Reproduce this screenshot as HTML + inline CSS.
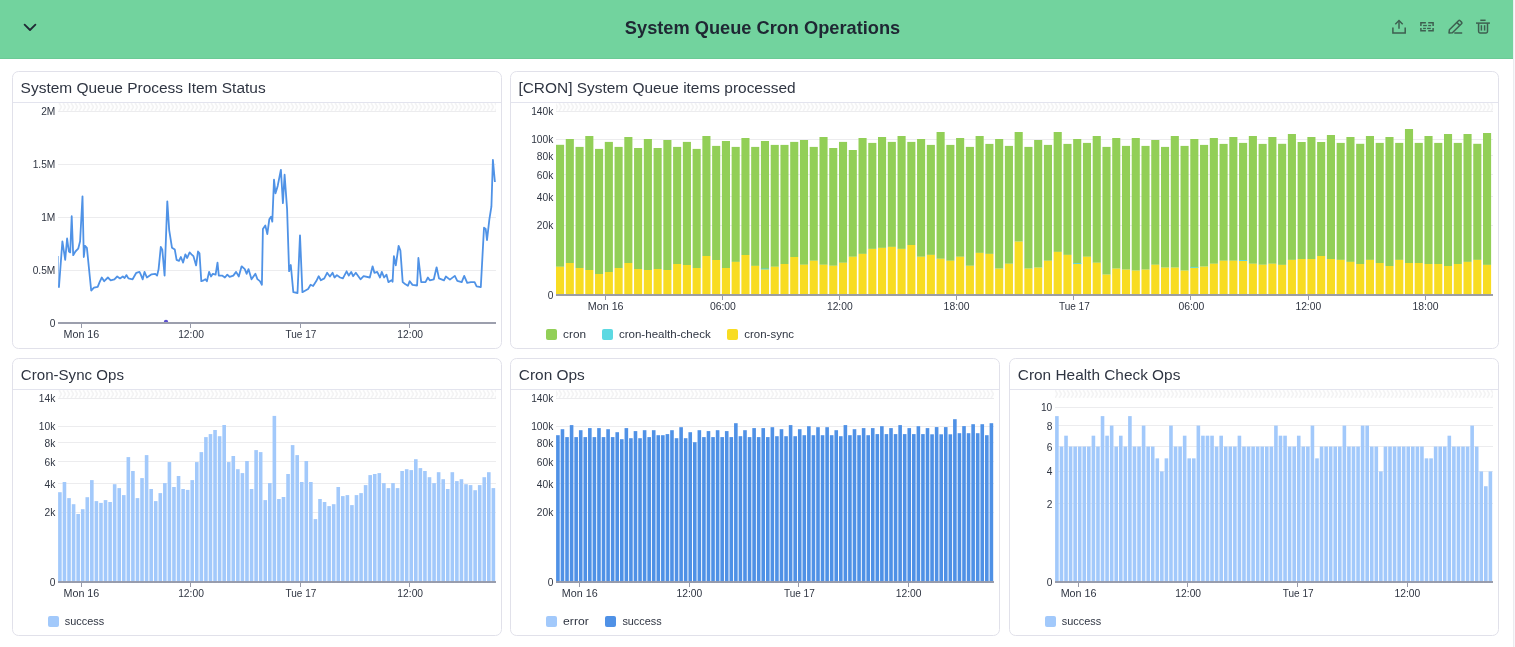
<!DOCTYPE html>
<html><head><meta charset="utf-8"><title>System Queue Cron Operations</title>
<style>
html,body{margin:0;padding:0;background:#fff;}
body{width:1515px;height:647px;overflow:hidden;font-family:"Liberation Sans", sans-serif;}
svg{display:block;font-family:"Liberation Sans", sans-serif;will-change:transform;}
</style></head><body>
<svg width="1515" height="647" viewBox="0 0 1515 647">
<defs><pattern id="hatch" x="2.8" y="103" width="4" height="8" patternUnits="userSpaceOnUse"><path d="M0 -0.5 L2.5 4 L0 8.5" fill="none" stroke="#f1f1f2" stroke-width="1.5"/></pattern><pattern id="hatch2" x="2.8" y="390" width="4" height="8" patternUnits="userSpaceOnUse"><path d="M0 -0.5 L2.5 4 L0 8.5" fill="none" stroke="#f1f1f2" stroke-width="1.5"/></pattern></defs>
<rect x="0" y="0" width="1513" height="59" fill="#72d39e"/>
<rect x="0" y="58" width="1513" height="1" fill="#6cca96"/>
<rect x="1513" y="0" width="1" height="647" fill="#ebebef"/>
<rect x="1514" y="0" width="1" height="647" fill="#f7f7fa"/>
<path d="M24.6 24.6 L30 30 L35.4 24.6" fill="none" stroke="#1f2a35" stroke-width="1.8" stroke-linecap="round" stroke-linejoin="round"/>
<text x="624.85" y="34.10" font-size="18.1" fill="#1f2733" font-weight="bold" textLength="275.38" lengthAdjust="spacingAndGlyphs">System Queue Cron Operations</text>
<g fill="none" stroke="#3e5f50" stroke-width="1.5" stroke-linecap="butt" stroke-linejoin="miter"><path d="M1392.9 27.4 V32.9 H1405.2 V27.4"/><path d="M1399 20.5 V28.7"/><path d="M1395.3 24.2 L1399 20.5 L1402.7 24.2"/><path d="M1425.9 22.8 H1420.9 V26"/><path d="M1420.9 28.1 V30.8 H1425.9"/><path d="M1428.2 22.8 H1433.1 V26"/><path d="M1433.1 28.1 V30.8 H1428.2"/></g>
<g fill="#3e5f50"><rect x="1423.1" y="24.9" width="3.7" height="1.3"/><rect x="1428.2" y="24.9" width="2.9" height="1.3"/><rect x="1423.1" y="27.8" width="2.8" height="1.3"/><rect x="1427.1" y="27.8" width="3.7" height="1.3"/></g>
<g fill="none" stroke="#3e5f50" stroke-width="1.5" stroke-linejoin="round"><path d="M1449 33 L1449.4 29.8 L1458.5 20.7 Q1459.3 19.9 1460.1 20.7 L1461.5 22.1 Q1462.3 22.9 1461.5 23.7 L1452.4 32.8 Z"/><path d="M1456.8 22.4 L1459.8 25.4"/><path d="M1454.3 33 H1462.2"/><path d="M1480.3 20.3 H1485.6"/><path d="M1476 23.1 H1489.9"/><path d="M1478.6 23.2 V31.6 Q1478.6 33 1480 33 H1486.1 Q1487.5 33 1487.5 31.6 V23.2"/><path d="M1481.4 25.2 V30.6"/><path d="M1484.6 25.2 V30.6"/></g>
<rect x="12.5" y="71.5" width="489" height="277" rx="6" ry="6" fill="#fff" stroke="#e1e1ea" stroke-width="1"/>
<text x="20.60" y="93.20" font-size="15.45" fill="#2f3542" font-weight="normal" textLength="245.04" lengthAdjust="spacingAndGlyphs">System Queue Process Item Status</text>
<rect x="13" y="102" width="488" height="1" fill="#e3e4ee"/>
<rect x="58" y="103" width="438" height="8" fill="url(#hatch)"/>
<rect x="58" y="111" width="438" height="1" fill="#ececee"/>
<rect x="58" y="164" width="438" height="1" fill="#ececee"/>
<rect x="58" y="217" width="438" height="1" fill="#ececee"/>
<rect x="58" y="270" width="438" height="1" fill="#ececee"/>
<text x="55.30" y="115.00" font-size="10.2" fill="#2f3542" text-anchor="end" font-weight="normal">2M</text>
<text x="55.30" y="168.00" font-size="10.2" fill="#2f3542" text-anchor="end" font-weight="normal">1.5M</text>
<text x="55.30" y="221.00" font-size="10.2" fill="#2f3542" text-anchor="end" font-weight="normal">1M</text>
<text x="55.30" y="274.00" font-size="10.2" fill="#2f3542" text-anchor="end" font-weight="normal">0.5M</text>
<text x="55.30" y="327.00" font-size="10.2" fill="#2f3542" text-anchor="end" font-weight="normal">0</text>
<rect x="58" y="256" width="1" height="31" fill="#4f92e6" opacity="0.55"/>
<polyline points="58.9,287.7 62.4,241.3 65.2,259.8 67.1,238.5 68.9,251.5 70.2,252.4 71.7,216.2 73.2,255.2 75.4,251.5 78.2,248.7 80.1,241.3 82.5,196.3 83.8,257.0 85.1,245.9 86.9,247.8 91.2,290.5 94.0,287.7 97.7,286.8 99.6,282.1 101.8,277.5 104.2,281.2 107.9,277.5 110.7,280.3 114.4,279.3 117.2,276.5 120.0,278.4 122.8,276.5 124.6,278.0 126.5,275.1 128.4,278.4 132.6,279.3 136.3,272.8 139.5,271.9 140.8,274.7 142.7,279.3 144.5,271.9 146.9,277.5 151.6,274.3 155.3,273.8 157.1,275.6 158.6,269.1 160.8,246.8 162.3,249.6 164.6,275.6 167.3,201.4 169.2,230.1 172.0,247.8 174.8,249.6 176.6,259.8 179.0,260.8 180.9,257.0 183.1,262.6 185.4,254.3 187.2,258.0 189.6,252.4 191.5,254.3 193.4,256.1 196.1,265.4 198.0,251.5 199.5,253.3 201.3,281.2 203.6,280.3 205.4,279.3 206.9,281.2 209.1,271.9 211.0,276.5 212.8,273.8 215.6,274.7 217.5,262.6 218.8,275.6 222.1,275.6 224.9,277.5 227.3,274.7 229.6,276.9 233.3,275.6 236.1,271.9 238.8,276.5 241.6,266.3 244.8,269.1 246.6,273.8 248.5,269.1 251.5,279.3 255.4,273.7 257.4,279.1 259.9,281.1 261.9,284.8 262.9,229.1 265.3,225.4 267.3,234.1 269.3,219.3 271.0,216.8 272.3,221.7 274.0,179.7 275.5,193.3 277.7,185.9 280.9,169.8 282.9,203.2 284.6,174.7 287.1,209.4 289.1,271.2 290.8,265.0 293.3,292.2 297.5,293.0 300.0,235.3 302.4,292.2 308.1,289.0 310.6,284.8 313.1,286.0 316.3,281.1 318.7,276.2 320.9,280.3 324.3,278.4 327.1,272.8 329.9,276.5 332.6,272.8 334.5,277.5 336.9,275.1 340.1,277.5 342.9,278.4 346.6,271.3 348.8,275.6 351.2,271.9 353.1,276.2 355.8,272.8 360.5,279.3 363.6,276.2 369.8,277.5 372.6,266.3 374.4,272.8 377.2,271.9 380.0,277.5 381.8,271.9 384.1,277.5 386.5,274.7 388.4,282.1 391.5,280.3 392.6,281.7 393.9,256.1 395.8,265.4 398.6,245.9 400.4,250.6 402.7,282.1 405.1,284.0 407.9,285.8 409.7,281.2 412.5,284.9 417.1,285.5 418.4,258.0 421.2,282.1 425.5,282.1 427.9,277.5 429.8,280.3 433.8,279.3 436.6,267.3 439.0,278.4 444.0,280.3 445.9,276.5 449.9,279.6 454.8,275.9 457.3,280.9 461.7,282.1 464.2,275.9 467.2,282.9 470.9,282.1 474.6,282.1 476.6,286.3 480.8,287.1 484.0,227.7 485.7,229.0 487.0,240.1 489.4,219.1 491.4,206.7 492.9,159.8 494.9,182.0" fill="none" stroke="#4f92e6" stroke-width="1.8" stroke-linejoin="round"/>
<rect x="81" y="324" width="1" height="4" fill="#979aa9"/>
<text x="63.46" y="338.00" font-size="10.4" fill="#2f3542" font-weight="normal" textLength="35.85" lengthAdjust="spacingAndGlyphs">Mon 16</text>
<rect x="190" y="324" width="1" height="4" fill="#979aa9"/>
<text x="178.13" y="338.00" font-size="10.4" fill="#2f3542" font-weight="normal" textLength="25.76" lengthAdjust="spacingAndGlyphs">12:00</text>
<rect x="300" y="324" width="1" height="4" fill="#979aa9"/>
<text x="285.52" y="338.00" font-size="10.4" fill="#2f3542" font-weight="normal" textLength="30.84" lengthAdjust="spacingAndGlyphs">Tue 17</text>
<rect x="409" y="324" width="1" height="4" fill="#979aa9"/>
<text x="397.33" y="338.00" font-size="10.4" fill="#2f3542" font-weight="normal" textLength="25.76" lengthAdjust="spacingAndGlyphs">12:00</text>
<rect x="58" y="322" width="438" height="2" fill="#979aa9" opacity="0.95"/>
<path d="M163.8 322 A2.2 2.2 0 0 1 168.2 322 Z" fill="#5b4fd0"/>
<rect x="510.5" y="71.5" width="988" height="277" rx="6" ry="6" fill="#fff" stroke="#e1e1ea" stroke-width="1"/>
<text x="518.42" y="93.20" font-size="15.45" fill="#2f3542" font-weight="normal" textLength="277.16" lengthAdjust="spacingAndGlyphs">[CRON] System Queue items processed</text>
<rect x="511" y="102" width="987" height="1" fill="#e3e4ee"/>
<rect x="556" y="103" width="937" height="8" fill="url(#hatch)"/>
<rect x="556" y="111" width="937" height="1" fill="#ececee"/>
<text x="553.30" y="115.00" font-size="10.2" fill="#2f3542" text-anchor="end" font-weight="normal">140k</text>
<rect x="556" y="139" width="937" height="1" fill="#ececee"/>
<text x="553.30" y="143.49" font-size="10.2" fill="#2f3542" text-anchor="end" font-weight="normal">100k</text>
<rect x="556" y="155" width="937" height="1" fill="#ececee"/>
<text x="553.30" y="159.91" font-size="10.2" fill="#2f3542" text-anchor="end" font-weight="normal">80k</text>
<rect x="556" y="174" width="937" height="1" fill="#ececee"/>
<text x="553.30" y="178.54" font-size="10.2" fill="#2f3542" text-anchor="end" font-weight="normal">60k</text>
<rect x="556" y="196" width="937" height="1" fill="#ececee"/>
<text x="553.30" y="200.65" font-size="10.2" fill="#2f3542" text-anchor="end" font-weight="normal">40k</text>
<rect x="556" y="225" width="937" height="1" fill="#ececee"/>
<text x="553.30" y="229.45" font-size="10.2" fill="#2f3542" text-anchor="end" font-weight="normal">20k</text>
<text x="553.30" y="299.00" font-size="10.2" fill="#2f3542" text-anchor="end" font-weight="normal">0</text>
<rect x="556.00" y="144.8" width="8.1" height="122.00" fill="#92cf57"/>
<rect x="556.00" y="266.8" width="8.1" height="29.20" fill="#f8dc22"/>
<rect x="565.76" y="139" width="8.1" height="124.00" fill="#92cf57"/>
<rect x="565.76" y="263" width="8.1" height="33.00" fill="#f8dc22"/>
<rect x="575.52" y="146.9" width="8.1" height="121.10" fill="#92cf57"/>
<rect x="575.52" y="268" width="8.1" height="28.00" fill="#f8dc22"/>
<rect x="585.27" y="136" width="8.1" height="134.00" fill="#92cf57"/>
<rect x="585.27" y="270" width="8.1" height="26.00" fill="#f8dc22"/>
<rect x="595.03" y="148.9" width="8.1" height="125.10" fill="#92cf57"/>
<rect x="595.03" y="274" width="8.1" height="22.00" fill="#f8dc22"/>
<rect x="604.79" y="141.9" width="8.1" height="130.10" fill="#92cf57"/>
<rect x="604.79" y="272" width="8.1" height="24.00" fill="#f8dc22"/>
<rect x="614.55" y="146.9" width="8.1" height="121.10" fill="#92cf57"/>
<rect x="614.55" y="268" width="8.1" height="28.00" fill="#f8dc22"/>
<rect x="624.31" y="137" width="8.1" height="126.00" fill="#92cf57"/>
<rect x="624.31" y="263" width="8.1" height="33.00" fill="#f8dc22"/>
<rect x="634.06" y="148" width="8.1" height="121.00" fill="#92cf57"/>
<rect x="634.06" y="269" width="8.1" height="27.00" fill="#f8dc22"/>
<rect x="643.82" y="139" width="8.1" height="131.00" fill="#92cf57"/>
<rect x="643.82" y="270" width="8.1" height="26.00" fill="#f8dc22"/>
<rect x="653.58" y="148" width="8.1" height="121.00" fill="#92cf57"/>
<rect x="653.58" y="269" width="8.1" height="27.00" fill="#f8dc22"/>
<rect x="663.34" y="140" width="8.1" height="130.00" fill="#92cf57"/>
<rect x="663.34" y="270" width="8.1" height="26.00" fill="#f8dc22"/>
<rect x="673.10" y="146.9" width="8.1" height="117.10" fill="#92cf57"/>
<rect x="673.10" y="264" width="8.1" height="32.00" fill="#f8dc22"/>
<rect x="682.85" y="141.9" width="8.1" height="123.10" fill="#92cf57"/>
<rect x="682.85" y="265" width="8.1" height="31.00" fill="#f8dc22"/>
<rect x="692.61" y="148.9" width="8.1" height="119.10" fill="#92cf57"/>
<rect x="692.61" y="268" width="8.1" height="28.00" fill="#f8dc22"/>
<rect x="702.37" y="136" width="8.1" height="120.00" fill="#92cf57"/>
<rect x="702.37" y="256" width="8.1" height="40.00" fill="#f8dc22"/>
<rect x="712.13" y="145.9" width="8.1" height="114.10" fill="#92cf57"/>
<rect x="712.13" y="260" width="8.1" height="36.00" fill="#f8dc22"/>
<rect x="721.89" y="141" width="8.1" height="127.00" fill="#92cf57"/>
<rect x="721.89" y="268" width="8.1" height="28.00" fill="#f8dc22"/>
<rect x="731.64" y="146.9" width="8.1" height="115.00" fill="#92cf57"/>
<rect x="731.64" y="261.9" width="8.1" height="34.10" fill="#f8dc22"/>
<rect x="741.40" y="138" width="8.1" height="117.00" fill="#92cf57"/>
<rect x="741.40" y="255" width="8.1" height="41.00" fill="#f8dc22"/>
<rect x="751.16" y="146.9" width="8.1" height="119.00" fill="#92cf57"/>
<rect x="751.16" y="265.9" width="8.1" height="30.10" fill="#f8dc22"/>
<rect x="760.92" y="141" width="8.1" height="128.30" fill="#92cf57"/>
<rect x="760.92" y="269.3" width="8.1" height="26.70" fill="#f8dc22"/>
<rect x="760.92" y="268.50" width="8.1" height="0.9" fill="#56d6e4"/>
<rect x="770.68" y="144.9" width="8.1" height="121.90" fill="#92cf57"/>
<rect x="770.68" y="266.8" width="8.1" height="29.20" fill="#f8dc22"/>
<rect x="780.43" y="144.9" width="8.1" height="119.10" fill="#92cf57"/>
<rect x="780.43" y="264" width="8.1" height="32.00" fill="#f8dc22"/>
<rect x="790.19" y="141.9" width="8.1" height="115.10" fill="#92cf57"/>
<rect x="790.19" y="257" width="8.1" height="39.00" fill="#f8dc22"/>
<rect x="799.95" y="140" width="8.1" height="124.80" fill="#92cf57"/>
<rect x="799.95" y="264.8" width="8.1" height="31.20" fill="#f8dc22"/>
<rect x="809.71" y="146.9" width="8.1" height="113.90" fill="#92cf57"/>
<rect x="809.71" y="260.8" width="8.1" height="35.20" fill="#f8dc22"/>
<rect x="819.47" y="137" width="8.1" height="127.80" fill="#92cf57"/>
<rect x="819.47" y="264.8" width="8.1" height="31.20" fill="#f8dc22"/>
<rect x="829.22" y="148" width="8.1" height="117.80" fill="#92cf57"/>
<rect x="829.22" y="265.8" width="8.1" height="30.20" fill="#f8dc22"/>
<rect x="838.98" y="141.9" width="8.1" height="120.90" fill="#92cf57"/>
<rect x="838.98" y="262.8" width="8.1" height="33.20" fill="#f8dc22"/>
<rect x="848.74" y="150" width="8.1" height="106.80" fill="#92cf57"/>
<rect x="848.74" y="256.8" width="8.1" height="39.20" fill="#f8dc22"/>
<rect x="858.50" y="138" width="8.1" height="115.90" fill="#92cf57"/>
<rect x="858.50" y="253.9" width="8.1" height="42.10" fill="#f8dc22"/>
<rect x="868.26" y="142.9" width="8.1" height="106.00" fill="#92cf57"/>
<rect x="868.26" y="248.9" width="8.1" height="47.10" fill="#f8dc22"/>
<rect x="878.01" y="137" width="8.1" height="110.90" fill="#92cf57"/>
<rect x="878.01" y="247.9" width="8.1" height="48.10" fill="#f8dc22"/>
<rect x="887.77" y="141.9" width="8.1" height="105.00" fill="#92cf57"/>
<rect x="887.77" y="246.9" width="8.1" height="49.10" fill="#f8dc22"/>
<rect x="897.53" y="136" width="8.1" height="112.90" fill="#92cf57"/>
<rect x="897.53" y="248.9" width="8.1" height="47.10" fill="#f8dc22"/>
<rect x="907.29" y="141.9" width="8.1" height="103.10" fill="#92cf57"/>
<rect x="907.29" y="245" width="8.1" height="51.00" fill="#f8dc22"/>
<rect x="917.05" y="139" width="8.1" height="117.80" fill="#92cf57"/>
<rect x="917.05" y="256.8" width="8.1" height="39.20" fill="#f8dc22"/>
<rect x="926.80" y="144.9" width="8.1" height="110.00" fill="#92cf57"/>
<rect x="926.80" y="254.9" width="8.1" height="41.10" fill="#f8dc22"/>
<rect x="936.56" y="132" width="8.1" height="126.80" fill="#92cf57"/>
<rect x="936.56" y="258.8" width="8.1" height="37.20" fill="#f8dc22"/>
<rect x="946.32" y="144.9" width="8.1" height="115.90" fill="#92cf57"/>
<rect x="946.32" y="260.8" width="8.1" height="35.20" fill="#f8dc22"/>
<rect x="956.08" y="138" width="8.1" height="118.80" fill="#92cf57"/>
<rect x="956.08" y="256.8" width="8.1" height="39.20" fill="#f8dc22"/>
<rect x="965.84" y="146.9" width="8.1" height="118.90" fill="#92cf57"/>
<rect x="965.84" y="265.8" width="8.1" height="30.20" fill="#f8dc22"/>
<rect x="975.59" y="136" width="8.1" height="116.90" fill="#92cf57"/>
<rect x="975.59" y="252.9" width="8.1" height="43.10" fill="#f8dc22"/>
<rect x="985.35" y="143.9" width="8.1" height="110.00" fill="#92cf57"/>
<rect x="985.35" y="253.9" width="8.1" height="42.10" fill="#f8dc22"/>
<rect x="995.11" y="139" width="8.1" height="129.70" fill="#92cf57"/>
<rect x="995.11" y="268.7" width="8.1" height="27.30" fill="#f8dc22"/>
<rect x="1004.87" y="145.9" width="8.1" height="117.90" fill="#92cf57"/>
<rect x="1004.87" y="263.8" width="8.1" height="32.20" fill="#f8dc22"/>
<rect x="1014.63" y="132" width="8.1" height="109.70" fill="#92cf57"/>
<rect x="1014.63" y="241.7" width="8.1" height="54.30" fill="#f8dc22"/>
<rect x="1024.38" y="146.9" width="8.1" height="121.80" fill="#92cf57"/>
<rect x="1024.38" y="268.7" width="8.1" height="27.30" fill="#f8dc22"/>
<rect x="1034.14" y="140" width="8.1" height="127.70" fill="#92cf57"/>
<rect x="1034.14" y="267.7" width="8.1" height="28.30" fill="#f8dc22"/>
<rect x="1043.90" y="144.9" width="8.1" height="115.90" fill="#92cf57"/>
<rect x="1043.90" y="260.8" width="8.1" height="35.20" fill="#f8dc22"/>
<rect x="1053.66" y="132" width="8.1" height="119.90" fill="#92cf57"/>
<rect x="1053.66" y="251.9" width="8.1" height="44.10" fill="#f8dc22"/>
<rect x="1063.42" y="143.9" width="8.1" height="111.00" fill="#92cf57"/>
<rect x="1063.42" y="254.9" width="8.1" height="41.10" fill="#f8dc22"/>
<rect x="1073.17" y="139" width="8.1" height="124.80" fill="#92cf57"/>
<rect x="1073.17" y="263.8" width="8.1" height="32.20" fill="#f8dc22"/>
<rect x="1073.17" y="263.00" width="8.1" height="0.9" fill="#56d6e4"/>
<rect x="1082.93" y="142.9" width="8.1" height="113.90" fill="#92cf57"/>
<rect x="1082.93" y="256.8" width="8.1" height="39.20" fill="#f8dc22"/>
<rect x="1092.69" y="136" width="8.1" height="126.80" fill="#92cf57"/>
<rect x="1092.69" y="262.8" width="8.1" height="33.20" fill="#f8dc22"/>
<rect x="1102.45" y="146.9" width="8.1" height="127.80" fill="#92cf57"/>
<rect x="1102.45" y="274.7" width="8.1" height="21.30" fill="#f8dc22"/>
<rect x="1112.21" y="138" width="8.1" height="130.70" fill="#92cf57"/>
<rect x="1112.21" y="268.7" width="8.1" height="27.30" fill="#f8dc22"/>
<rect x="1121.96" y="145.9" width="8.1" height="123.80" fill="#92cf57"/>
<rect x="1121.96" y="269.7" width="8.1" height="26.30" fill="#f8dc22"/>
<rect x="1131.72" y="138" width="8.1" height="132.70" fill="#92cf57"/>
<rect x="1131.72" y="270.7" width="8.1" height="25.30" fill="#f8dc22"/>
<rect x="1141.48" y="145.9" width="8.1" height="123.80" fill="#92cf57"/>
<rect x="1141.48" y="269.7" width="8.1" height="26.30" fill="#f8dc22"/>
<rect x="1151.24" y="140" width="8.1" height="124.80" fill="#92cf57"/>
<rect x="1151.24" y="264.8" width="8.1" height="31.20" fill="#f8dc22"/>
<rect x="1161.00" y="146.9" width="8.1" height="120.80" fill="#92cf57"/>
<rect x="1161.00" y="267.7" width="8.1" height="28.30" fill="#f8dc22"/>
<rect x="1170.75" y="136" width="8.1" height="131.70" fill="#92cf57"/>
<rect x="1170.75" y="267.7" width="8.1" height="28.30" fill="#f8dc22"/>
<rect x="1180.51" y="145.9" width="8.1" height="124.80" fill="#92cf57"/>
<rect x="1180.51" y="270.7" width="8.1" height="25.30" fill="#f8dc22"/>
<rect x="1190.27" y="139" width="8.1" height="128.70" fill="#92cf57"/>
<rect x="1190.27" y="267.7" width="8.1" height="28.30" fill="#f8dc22"/>
<rect x="1190.27" y="266.90" width="8.1" height="0.9" fill="#56d6e4"/>
<rect x="1200.03" y="144.9" width="8.1" height="121.80" fill="#92cf57"/>
<rect x="1200.03" y="266.7" width="8.1" height="29.30" fill="#f8dc22"/>
<rect x="1209.79" y="138" width="8.1" height="125.80" fill="#92cf57"/>
<rect x="1209.79" y="263.8" width="8.1" height="32.20" fill="#f8dc22"/>
<rect x="1219.54" y="143.9" width="8.1" height="116.90" fill="#92cf57"/>
<rect x="1219.54" y="260.8" width="8.1" height="35.20" fill="#f8dc22"/>
<rect x="1229.30" y="137" width="8.1" height="123.80" fill="#92cf57"/>
<rect x="1229.30" y="260.8" width="8.1" height="35.20" fill="#f8dc22"/>
<rect x="1239.06" y="142.9" width="8.1" height="117.90" fill="#92cf57"/>
<rect x="1239.06" y="260.8" width="8.1" height="35.20" fill="#f8dc22"/>
<rect x="1239.06" y="260.00" width="8.1" height="0.9" fill="#56d6e4"/>
<rect x="1248.82" y="136" width="8.1" height="127.80" fill="#92cf57"/>
<rect x="1248.82" y="263.8" width="8.1" height="32.20" fill="#f8dc22"/>
<rect x="1258.58" y="143.9" width="8.1" height="120.90" fill="#92cf57"/>
<rect x="1258.58" y="264.8" width="8.1" height="31.20" fill="#f8dc22"/>
<rect x="1268.33" y="137" width="8.1" height="126.80" fill="#92cf57"/>
<rect x="1268.33" y="263.8" width="8.1" height="32.20" fill="#f8dc22"/>
<rect x="1278.09" y="143.8" width="8.1" height="121.10" fill="#92cf57"/>
<rect x="1278.09" y="264.9" width="8.1" height="31.10" fill="#f8dc22"/>
<rect x="1287.85" y="134" width="8.1" height="125.90" fill="#92cf57"/>
<rect x="1287.85" y="259.9" width="8.1" height="36.10" fill="#f8dc22"/>
<rect x="1297.61" y="142" width="8.1" height="117.00" fill="#92cf57"/>
<rect x="1297.61" y="259" width="8.1" height="37.00" fill="#f8dc22"/>
<rect x="1307.37" y="137" width="8.1" height="122.00" fill="#92cf57"/>
<rect x="1307.37" y="259" width="8.1" height="37.00" fill="#f8dc22"/>
<rect x="1317.12" y="142" width="8.1" height="114.00" fill="#92cf57"/>
<rect x="1317.12" y="256" width="8.1" height="40.00" fill="#f8dc22"/>
<rect x="1326.88" y="135" width="8.1" height="124.00" fill="#92cf57"/>
<rect x="1326.88" y="259" width="8.1" height="37.00" fill="#f8dc22"/>
<rect x="1336.64" y="142.9" width="8.1" height="117.00" fill="#92cf57"/>
<rect x="1336.64" y="259.9" width="8.1" height="36.10" fill="#f8dc22"/>
<rect x="1346.40" y="137" width="8.1" height="124.90" fill="#92cf57"/>
<rect x="1346.40" y="261.9" width="8.1" height="34.10" fill="#f8dc22"/>
<rect x="1356.16" y="143.8" width="8.1" height="120.20" fill="#92cf57"/>
<rect x="1356.16" y="264" width="8.1" height="32.00" fill="#f8dc22"/>
<rect x="1365.91" y="136" width="8.1" height="123.90" fill="#92cf57"/>
<rect x="1365.91" y="259.9" width="8.1" height="36.10" fill="#f8dc22"/>
<rect x="1375.67" y="142.9" width="8.1" height="120.10" fill="#92cf57"/>
<rect x="1375.67" y="263" width="8.1" height="33.00" fill="#f8dc22"/>
<rect x="1385.43" y="137" width="8.1" height="129.00" fill="#92cf57"/>
<rect x="1385.43" y="266" width="8.1" height="30.00" fill="#f8dc22"/>
<rect x="1395.19" y="142.9" width="8.1" height="117.00" fill="#92cf57"/>
<rect x="1395.19" y="259.9" width="8.1" height="36.10" fill="#f8dc22"/>
<rect x="1404.95" y="129" width="8.1" height="134.00" fill="#92cf57"/>
<rect x="1404.95" y="263" width="8.1" height="33.00" fill="#f8dc22"/>
<rect x="1414.70" y="142.9" width="8.1" height="120.10" fill="#92cf57"/>
<rect x="1414.70" y="263" width="8.1" height="33.00" fill="#f8dc22"/>
<rect x="1424.46" y="136" width="8.1" height="128.00" fill="#92cf57"/>
<rect x="1424.46" y="264" width="8.1" height="32.00" fill="#f8dc22"/>
<rect x="1434.22" y="142.9" width="8.1" height="121.10" fill="#92cf57"/>
<rect x="1434.22" y="264" width="8.1" height="32.00" fill="#f8dc22"/>
<rect x="1443.98" y="134" width="8.1" height="132.00" fill="#92cf57"/>
<rect x="1443.98" y="266" width="8.1" height="30.00" fill="#f8dc22"/>
<rect x="1453.74" y="142.9" width="8.1" height="121.10" fill="#92cf57"/>
<rect x="1453.74" y="264" width="8.1" height="32.00" fill="#f8dc22"/>
<rect x="1463.49" y="134" width="8.1" height="127.90" fill="#92cf57"/>
<rect x="1463.49" y="261.9" width="8.1" height="34.10" fill="#f8dc22"/>
<rect x="1473.25" y="143.8" width="8.1" height="116.10" fill="#92cf57"/>
<rect x="1473.25" y="259.9" width="8.1" height="36.10" fill="#f8dc22"/>
<rect x="1483.01" y="133" width="8.1" height="131.90" fill="#92cf57"/>
<rect x="1483.01" y="264.9" width="8.1" height="31.10" fill="#f8dc22"/>
<rect x="605" y="296" width="1" height="4" fill="#979aa9"/>
<text x="587.76" y="310.00" font-size="10.4" fill="#2f3542" font-weight="normal" textLength="35.85" lengthAdjust="spacingAndGlyphs">Mon 16</text>
<rect x="722" y="296" width="1" height="4" fill="#979aa9"/>
<text x="709.88" y="310.00" font-size="10.4" fill="#2f3542" font-weight="normal" textLength="26.01" lengthAdjust="spacingAndGlyphs">06:00</text>
<rect x="839" y="296" width="1" height="4" fill="#979aa9"/>
<text x="826.93" y="310.00" font-size="10.4" fill="#2f3542" font-weight="normal" textLength="25.76" lengthAdjust="spacingAndGlyphs">12:00</text>
<rect x="956" y="296" width="1" height="4" fill="#979aa9"/>
<text x="943.62" y="310.00" font-size="10.4" fill="#2f3542" font-weight="normal" textLength="25.97" lengthAdjust="spacingAndGlyphs">18:00</text>
<rect x="1073" y="296" width="1" height="4" fill="#979aa9"/>
<text x="1058.92" y="310.00" font-size="10.4" fill="#2f3542" font-weight="normal" textLength="30.84" lengthAdjust="spacingAndGlyphs">Tue 17</text>
<rect x="1190" y="296" width="1" height="4" fill="#979aa9"/>
<text x="1178.38" y="310.00" font-size="10.4" fill="#2f3542" font-weight="normal" textLength="26.01" lengthAdjust="spacingAndGlyphs">06:00</text>
<rect x="1308" y="296" width="1" height="4" fill="#979aa9"/>
<text x="1295.43" y="310.00" font-size="10.4" fill="#2f3542" font-weight="normal" textLength="25.76" lengthAdjust="spacingAndGlyphs">12:00</text>
<rect x="1425" y="296" width="1" height="4" fill="#979aa9"/>
<text x="1412.52" y="310.00" font-size="10.4" fill="#2f3542" font-weight="normal" textLength="25.97" lengthAdjust="spacingAndGlyphs">18:00</text>
<rect x="556" y="294" width="937" height="2" fill="#979aa9" opacity="0.95"/>
<rect x="546" y="329" width="11" height="11" rx="2" fill="#92cf57"/>
<text x="563.10" y="337.60" font-size="11.3" fill="#2f3542" font-weight="normal" textLength="22.94" lengthAdjust="spacingAndGlyphs">cron</text>
<rect x="602" y="329" width="11" height="11" rx="2" fill="#5cd9e2"/>
<text x="618.91" y="337.60" font-size="11.3" fill="#2f3542" font-weight="normal" textLength="91.80" lengthAdjust="spacingAndGlyphs">cron-health-check</text>
<rect x="727" y="329" width="11" height="11" rx="2" fill="#f8dc22"/>
<text x="744.31" y="337.60" font-size="11.3" fill="#2f3542" font-weight="normal" textLength="49.70" lengthAdjust="spacingAndGlyphs">cron-sync</text>
<rect x="12.5" y="358.5" width="489" height="277" rx="6" ry="6" fill="#fff" stroke="#e1e1ea" stroke-width="1"/>
<text x="20.85" y="380.20" font-size="15.45" fill="#2f3542" font-weight="normal" textLength="103.09" lengthAdjust="spacingAndGlyphs">Cron-Sync Ops</text>
<rect x="13" y="389" width="488" height="1" fill="#e3e4ee"/>
<rect x="58" y="390" width="438" height="8" fill="url(#hatch2)"/>
<rect x="58" y="398" width="438" height="1" fill="#ececee"/>
<text x="55.30" y="402.00" font-size="10.2" fill="#2f3542" text-anchor="end" font-weight="normal">14k</text>
<rect x="58" y="426" width="438" height="1" fill="#ececee"/>
<text x="55.30" y="430.49" font-size="10.2" fill="#2f3542" text-anchor="end" font-weight="normal">10k</text>
<rect x="58" y="442" width="438" height="1" fill="#ececee"/>
<text x="55.30" y="446.91" font-size="10.2" fill="#2f3542" text-anchor="end" font-weight="normal">8k</text>
<rect x="58" y="461" width="438" height="1" fill="#ececee"/>
<text x="55.30" y="465.54" font-size="10.2" fill="#2f3542" text-anchor="end" font-weight="normal">6k</text>
<rect x="58" y="483" width="438" height="1" fill="#ececee"/>
<text x="55.30" y="487.65" font-size="10.2" fill="#2f3542" text-anchor="end" font-weight="normal">4k</text>
<rect x="58" y="512" width="438" height="1" fill="#ececee"/>
<text x="55.30" y="516.45" font-size="10.2" fill="#2f3542" text-anchor="end" font-weight="normal">2k</text>
<text x="55.30" y="586.00" font-size="10.2" fill="#2f3542" text-anchor="end" font-weight="normal">0</text>
<rect x="58.10" y="492.2" width="3.6" height="90.80" fill="#a2c9fb"/>
<rect x="62.66" y="482" width="3.6" height="101.00" fill="#a2c9fb"/>
<rect x="67.23" y="498.1" width="3.6" height="84.90" fill="#a2c9fb"/>
<rect x="71.79" y="504.2" width="3.6" height="78.80" fill="#a2c9fb"/>
<rect x="76.35" y="514" width="3.6" height="69.00" fill="#a2c9fb"/>
<rect x="80.91" y="509.2" width="3.6" height="73.80" fill="#a2c9fb"/>
<rect x="85.48" y="497.2" width="3.6" height="85.80" fill="#a2c9fb"/>
<rect x="90.04" y="480.1" width="3.6" height="102.90" fill="#a2c9fb"/>
<rect x="94.60" y="501.1" width="3.6" height="81.90" fill="#a2c9fb"/>
<rect x="99.17" y="502.9" width="3.6" height="80.10" fill="#a2c9fb"/>
<rect x="103.73" y="500.1" width="3.6" height="82.90" fill="#a2c9fb"/>
<rect x="108.29" y="502" width="3.6" height="81.00" fill="#a2c9fb"/>
<rect x="112.86" y="484.2" width="3.6" height="98.80" fill="#a2c9fb"/>
<rect x="117.42" y="488.1" width="3.6" height="94.90" fill="#a2c9fb"/>
<rect x="121.98" y="495.1" width="3.6" height="87.90" fill="#a2c9fb"/>
<rect x="126.54" y="457.1" width="3.6" height="125.90" fill="#a2c9fb"/>
<rect x="131.11" y="471" width="3.6" height="112.00" fill="#a2c9fb"/>
<rect x="135.67" y="498.1" width="3.6" height="84.90" fill="#a2c9fb"/>
<rect x="140.23" y="478.1" width="3.6" height="104.90" fill="#a2c9fb"/>
<rect x="144.80" y="455.1" width="3.6" height="127.90" fill="#a2c9fb"/>
<rect x="149.36" y="489" width="3.6" height="94.00" fill="#a2c9fb"/>
<rect x="153.92" y="501.1" width="3.6" height="81.90" fill="#a2c9fb"/>
<rect x="158.49" y="493.1" width="3.6" height="89.90" fill="#a2c9fb"/>
<rect x="163.05" y="483.1" width="3.6" height="99.90" fill="#a2c9fb"/>
<rect x="167.61" y="462.1" width="3.6" height="120.90" fill="#a2c9fb"/>
<rect x="172.17" y="487" width="3.6" height="96.00" fill="#a2c9fb"/>
<rect x="176.74" y="476" width="3.6" height="107.00" fill="#a2c9fb"/>
<rect x="181.30" y="489" width="3.6" height="94.00" fill="#a2c9fb"/>
<rect x="185.86" y="489.9" width="3.6" height="93.10" fill="#a2c9fb"/>
<rect x="190.43" y="480.1" width="3.6" height="102.90" fill="#a2c9fb"/>
<rect x="194.99" y="462.1" width="3.6" height="120.90" fill="#a2c9fb"/>
<rect x="199.55" y="452.1" width="3.6" height="130.90" fill="#a2c9fb"/>
<rect x="204.12" y="437.1" width="3.6" height="145.90" fill="#a2c9fb"/>
<rect x="208.68" y="434.1" width="3.6" height="148.90" fill="#a2c9fb"/>
<rect x="213.24" y="430" width="3.6" height="153.00" fill="#a2c9fb"/>
<rect x="217.80" y="436.2" width="3.6" height="146.80" fill="#a2c9fb"/>
<rect x="222.37" y="425" width="3.6" height="158.00" fill="#a2c9fb"/>
<rect x="226.93" y="462.1" width="3.6" height="120.90" fill="#a2c9fb"/>
<rect x="231.49" y="456" width="3.6" height="127.00" fill="#a2c9fb"/>
<rect x="236.06" y="469.2" width="3.6" height="113.80" fill="#a2c9fb"/>
<rect x="240.62" y="473.1" width="3.6" height="109.90" fill="#a2c9fb"/>
<rect x="245.18" y="461" width="3.6" height="122.00" fill="#a2c9fb"/>
<rect x="249.75" y="489" width="3.6" height="94.00" fill="#a2c9fb"/>
<rect x="254.31" y="450.1" width="3.6" height="132.90" fill="#a2c9fb"/>
<rect x="258.87" y="452.1" width="3.6" height="130.90" fill="#a2c9fb"/>
<rect x="263.44" y="500.1" width="3.6" height="82.90" fill="#a2c9fb"/>
<rect x="268.00" y="483.1" width="3.6" height="99.90" fill="#a2c9fb"/>
<rect x="272.56" y="415.9" width="3.6" height="167.10" fill="#a2c9fb"/>
<rect x="277.12" y="499" width="3.6" height="84.00" fill="#a2c9fb"/>
<rect x="281.69" y="497" width="3.6" height="86.00" fill="#a2c9fb"/>
<rect x="286.25" y="474" width="3.6" height="109.00" fill="#a2c9fb"/>
<rect x="290.81" y="445.1" width="3.6" height="137.90" fill="#a2c9fb"/>
<rect x="295.38" y="455.1" width="3.6" height="127.90" fill="#a2c9fb"/>
<rect x="299.94" y="482" width="3.6" height="101.00" fill="#a2c9fb"/>
<rect x="304.50" y="461" width="3.6" height="122.00" fill="#a2c9fb"/>
<rect x="309.06" y="482" width="3.6" height="101.00" fill="#a2c9fb"/>
<rect x="313.63" y="519.1" width="3.6" height="63.90" fill="#a2c9fb"/>
<rect x="318.19" y="499" width="3.6" height="84.00" fill="#a2c9fb"/>
<rect x="322.75" y="502" width="3.6" height="81.00" fill="#a2c9fb"/>
<rect x="327.32" y="506.1" width="3.6" height="76.90" fill="#a2c9fb"/>
<rect x="331.88" y="504.2" width="3.6" height="78.80" fill="#a2c9fb"/>
<rect x="336.44" y="487" width="3.6" height="96.00" fill="#a2c9fb"/>
<rect x="341.01" y="496.1" width="3.6" height="86.90" fill="#a2c9fb"/>
<rect x="345.57" y="495.1" width="3.6" height="87.90" fill="#a2c9fb"/>
<rect x="350.13" y="505.1" width="3.6" height="77.90" fill="#a2c9fb"/>
<rect x="354.69" y="495.1" width="3.6" height="87.90" fill="#a2c9fb"/>
<rect x="359.26" y="493.1" width="3.6" height="89.90" fill="#a2c9fb"/>
<rect x="363.82" y="485.1" width="3.6" height="97.90" fill="#a2c9fb"/>
<rect x="368.38" y="475.1" width="3.6" height="107.90" fill="#a2c9fb"/>
<rect x="372.95" y="474" width="3.6" height="109.00" fill="#a2c9fb"/>
<rect x="377.51" y="473.1" width="3.6" height="109.90" fill="#a2c9fb"/>
<rect x="382.07" y="483.1" width="3.6" height="99.90" fill="#a2c9fb"/>
<rect x="386.64" y="488.1" width="3.6" height="94.90" fill="#a2c9fb"/>
<rect x="391.20" y="483.1" width="3.6" height="99.90" fill="#a2c9fb"/>
<rect x="395.76" y="488.1" width="3.6" height="94.90" fill="#a2c9fb"/>
<rect x="400.32" y="471" width="3.6" height="112.00" fill="#a2c9fb"/>
<rect x="404.89" y="469.2" width="3.6" height="113.80" fill="#a2c9fb"/>
<rect x="409.45" y="470.1" width="3.6" height="112.90" fill="#a2c9fb"/>
<rect x="414.01" y="459.2" width="3.6" height="123.80" fill="#a2c9fb"/>
<rect x="418.58" y="468.1" width="3.6" height="114.90" fill="#a2c9fb"/>
<rect x="423.14" y="471" width="3.6" height="112.00" fill="#a2c9fb"/>
<rect x="427.70" y="477.2" width="3.6" height="105.80" fill="#a2c9fb"/>
<rect x="432.27" y="483.1" width="3.6" height="99.90" fill="#a2c9fb"/>
<rect x="436.83" y="472.2" width="3.6" height="110.80" fill="#a2c9fb"/>
<rect x="441.39" y="479.2" width="3.6" height="103.80" fill="#a2c9fb"/>
<rect x="445.95" y="489" width="3.6" height="94.00" fill="#a2c9fb"/>
<rect x="450.52" y="472.2" width="3.6" height="110.80" fill="#a2c9fb"/>
<rect x="455.08" y="481.1" width="3.6" height="101.90" fill="#a2c9fb"/>
<rect x="459.64" y="479.2" width="3.6" height="103.80" fill="#a2c9fb"/>
<rect x="464.21" y="484.2" width="3.6" height="98.80" fill="#a2c9fb"/>
<rect x="468.77" y="485.1" width="3.6" height="97.90" fill="#a2c9fb"/>
<rect x="473.33" y="490.2" width="3.6" height="92.80" fill="#a2c9fb"/>
<rect x="477.90" y="485.1" width="3.6" height="97.90" fill="#a2c9fb"/>
<rect x="482.46" y="477.2" width="3.6" height="105.80" fill="#a2c9fb"/>
<rect x="487.02" y="472.2" width="3.6" height="110.80" fill="#a2c9fb"/>
<rect x="491.58" y="488.1" width="3.6" height="94.90" fill="#a2c9fb"/>
<rect x="81" y="583" width="1" height="4" fill="#979aa9"/>
<text x="63.46" y="597.00" font-size="10.4" fill="#2f3542" font-weight="normal" textLength="35.85" lengthAdjust="spacingAndGlyphs">Mon 16</text>
<rect x="190" y="583" width="1" height="4" fill="#979aa9"/>
<text x="178.13" y="597.00" font-size="10.4" fill="#2f3542" font-weight="normal" textLength="25.76" lengthAdjust="spacingAndGlyphs">12:00</text>
<rect x="300" y="583" width="1" height="4" fill="#979aa9"/>
<text x="285.52" y="597.00" font-size="10.4" fill="#2f3542" font-weight="normal" textLength="30.84" lengthAdjust="spacingAndGlyphs">Tue 17</text>
<rect x="409" y="583" width="1" height="4" fill="#979aa9"/>
<text x="397.33" y="597.00" font-size="10.4" fill="#2f3542" font-weight="normal" textLength="25.76" lengthAdjust="spacingAndGlyphs">12:00</text>
<rect x="58" y="581" width="438" height="2" fill="#979aa9" opacity="0.95"/>
<rect x="48" y="616" width="11" height="11" rx="2" fill="#a2c9fb"/>
<text x="64.80" y="624.60" font-size="11.3" fill="#2f3542" font-weight="normal" textLength="39.38" lengthAdjust="spacingAndGlyphs">success</text>
<rect x="510.5" y="358.5" width="489" height="277" rx="6" ry="6" fill="#fff" stroke="#e1e1ea" stroke-width="1"/>
<text x="518.83" y="380.20" font-size="15.45" fill="#2f3542" font-weight="normal" textLength="66.00" lengthAdjust="spacingAndGlyphs">Cron Ops</text>
<rect x="511" y="389" width="488" height="1" fill="#e3e4ee"/>
<rect x="556" y="390" width="438" height="8" fill="url(#hatch2)"/>
<rect x="556" y="398" width="438" height="1" fill="#ececee"/>
<text x="553.30" y="402.00" font-size="10.2" fill="#2f3542" text-anchor="end" font-weight="normal">140k</text>
<rect x="556" y="426" width="438" height="1" fill="#ececee"/>
<text x="553.30" y="430.49" font-size="10.2" fill="#2f3542" text-anchor="end" font-weight="normal">100k</text>
<rect x="556" y="442" width="438" height="1" fill="#ececee"/>
<text x="553.30" y="446.91" font-size="10.2" fill="#2f3542" text-anchor="end" font-weight="normal">80k</text>
<rect x="556" y="461" width="438" height="1" fill="#ececee"/>
<text x="553.30" y="465.54" font-size="10.2" fill="#2f3542" text-anchor="end" font-weight="normal">60k</text>
<rect x="556" y="483" width="438" height="1" fill="#ececee"/>
<text x="553.30" y="487.65" font-size="10.2" fill="#2f3542" text-anchor="end" font-weight="normal">40k</text>
<rect x="556" y="512" width="438" height="1" fill="#ececee"/>
<text x="553.30" y="516.45" font-size="10.2" fill="#2f3542" text-anchor="end" font-weight="normal">20k</text>
<text x="553.30" y="586.00" font-size="10.2" fill="#2f3542" text-anchor="end" font-weight="normal">0</text>
<rect x="556.10" y="435.2" width="3.6" height="147.80" fill="#4f91e6"/>
<rect x="560.66" y="429.2" width="3.6" height="153.80" fill="#4f91e6"/>
<rect x="565.23" y="437.1" width="3.6" height="145.90" fill="#4f91e6"/>
<rect x="569.79" y="425.1" width="3.6" height="157.90" fill="#4f91e6"/>
<rect x="574.35" y="437.1" width="3.6" height="145.90" fill="#4f91e6"/>
<rect x="578.91" y="430.2" width="3.6" height="152.80" fill="#4f91e6"/>
<rect x="583.48" y="437.1" width="3.6" height="145.90" fill="#4f91e6"/>
<rect x="588.04" y="428.1" width="3.6" height="154.90" fill="#4f91e6"/>
<rect x="592.60" y="437.1" width="3.6" height="145.90" fill="#4f91e6"/>
<rect x="597.17" y="428.1" width="3.6" height="154.90" fill="#4f91e6"/>
<rect x="601.73" y="437.1" width="3.6" height="145.90" fill="#4f91e6"/>
<rect x="606.29" y="429.2" width="3.6" height="153.80" fill="#4f91e6"/>
<rect x="610.86" y="437.1" width="3.6" height="145.90" fill="#4f91e6"/>
<rect x="615.42" y="432.2" width="3.6" height="150.80" fill="#4f91e6"/>
<rect x="619.98" y="439.2" width="3.6" height="143.80" fill="#4f91e6"/>
<rect x="624.55" y="428.1" width="3.6" height="154.90" fill="#4f91e6"/>
<rect x="629.11" y="438.2" width="3.6" height="144.80" fill="#4f91e6"/>
<rect x="633.67" y="431.1" width="3.6" height="151.90" fill="#4f91e6"/>
<rect x="638.23" y="438.2" width="3.6" height="144.80" fill="#4f91e6"/>
<rect x="642.80" y="430.2" width="3.6" height="152.80" fill="#4f91e6"/>
<rect x="647.36" y="437.1" width="3.6" height="145.90" fill="#4f91e6"/>
<rect x="651.92" y="430.2" width="3.6" height="152.80" fill="#4f91e6"/>
<rect x="656.49" y="435.2" width="3.6" height="147.80" fill="#4f91e6"/>
<rect x="661.05" y="435.2" width="3.6" height="147.80" fill="#4f91e6"/>
<rect x="665.61" y="434.1" width="3.6" height="148.90" fill="#4f91e6"/>
<rect x="670.17" y="430.2" width="3.6" height="152.80" fill="#4f91e6"/>
<rect x="674.74" y="438.2" width="3.6" height="144.80" fill="#4f91e6"/>
<rect x="679.30" y="427.2" width="3.6" height="155.80" fill="#4f91e6"/>
<rect x="683.86" y="438.2" width="3.6" height="144.80" fill="#4f91e6"/>
<rect x="688.43" y="432.2" width="3.6" height="150.80" fill="#4f91e6"/>
<rect x="692.99" y="442.2" width="3.6" height="140.80" fill="#4f91e6"/>
<rect x="697.55" y="430.2" width="3.6" height="152.80" fill="#4f91e6"/>
<rect x="702.12" y="437.1" width="3.6" height="145.90" fill="#4f91e6"/>
<rect x="706.68" y="431.1" width="3.6" height="151.90" fill="#4f91e6"/>
<rect x="711.24" y="437.1" width="3.6" height="145.90" fill="#4f91e6"/>
<rect x="715.81" y="430.2" width="3.6" height="152.80" fill="#4f91e6"/>
<rect x="720.37" y="437.1" width="3.6" height="145.90" fill="#4f91e6"/>
<rect x="724.93" y="431.1" width="3.6" height="151.90" fill="#4f91e6"/>
<rect x="729.49" y="437.1" width="3.6" height="145.90" fill="#4f91e6"/>
<rect x="734.06" y="423.2" width="3.6" height="159.80" fill="#4f91e6"/>
<rect x="738.62" y="436.2" width="3.6" height="146.80" fill="#4f91e6"/>
<rect x="743.18" y="430.2" width="3.6" height="152.80" fill="#4f91e6"/>
<rect x="747.75" y="437.1" width="3.6" height="145.90" fill="#4f91e6"/>
<rect x="752.31" y="428.1" width="3.6" height="154.90" fill="#4f91e6"/>
<rect x="756.87" y="437.1" width="3.6" height="145.90" fill="#4f91e6"/>
<rect x="761.43" y="428.1" width="3.6" height="154.90" fill="#4f91e6"/>
<rect x="766.00" y="437.1" width="3.6" height="145.90" fill="#4f91e6"/>
<rect x="770.56" y="427.2" width="3.6" height="155.80" fill="#4f91e6"/>
<rect x="775.12" y="436.2" width="3.6" height="146.80" fill="#4f91e6"/>
<rect x="779.69" y="429.2" width="3.6" height="153.80" fill="#4f91e6"/>
<rect x="784.25" y="436.2" width="3.6" height="146.80" fill="#4f91e6"/>
<rect x="788.81" y="425.1" width="3.6" height="157.90" fill="#4f91e6"/>
<rect x="793.38" y="436.2" width="3.6" height="146.80" fill="#4f91e6"/>
<rect x="797.94" y="429.2" width="3.6" height="153.80" fill="#4f91e6"/>
<rect x="802.50" y="435.2" width="3.6" height="147.80" fill="#4f91e6"/>
<rect x="807.07" y="426.2" width="3.6" height="156.80" fill="#4f91e6"/>
<rect x="811.63" y="435.2" width="3.6" height="147.80" fill="#4f91e6"/>
<rect x="816.19" y="427.2" width="3.6" height="155.80" fill="#4f91e6"/>
<rect x="820.75" y="435.2" width="3.6" height="147.80" fill="#4f91e6"/>
<rect x="825.32" y="427.2" width="3.6" height="155.80" fill="#4f91e6"/>
<rect x="829.88" y="435.2" width="3.6" height="147.80" fill="#4f91e6"/>
<rect x="834.44" y="430.2" width="3.6" height="152.80" fill="#4f91e6"/>
<rect x="839.01" y="436.2" width="3.6" height="146.80" fill="#4f91e6"/>
<rect x="843.57" y="425.1" width="3.6" height="157.90" fill="#4f91e6"/>
<rect x="848.13" y="435.2" width="3.6" height="147.80" fill="#4f91e6"/>
<rect x="852.69" y="429.2" width="3.6" height="153.80" fill="#4f91e6"/>
<rect x="857.26" y="435.2" width="3.6" height="147.80" fill="#4f91e6"/>
<rect x="861.82" y="428.1" width="3.6" height="154.90" fill="#4f91e6"/>
<rect x="866.38" y="435.2" width="3.6" height="147.80" fill="#4f91e6"/>
<rect x="870.95" y="428.1" width="3.6" height="154.90" fill="#4f91e6"/>
<rect x="875.51" y="434.1" width="3.6" height="148.90" fill="#4f91e6"/>
<rect x="880.07" y="426.2" width="3.6" height="156.80" fill="#4f91e6"/>
<rect x="884.64" y="434.1" width="3.6" height="148.90" fill="#4f91e6"/>
<rect x="889.20" y="428.1" width="3.6" height="154.90" fill="#4f91e6"/>
<rect x="893.76" y="434.1" width="3.6" height="148.90" fill="#4f91e6"/>
<rect x="898.33" y="425.1" width="3.6" height="157.90" fill="#4f91e6"/>
<rect x="902.89" y="434.1" width="3.6" height="148.90" fill="#4f91e6"/>
<rect x="907.45" y="428.1" width="3.6" height="154.90" fill="#4f91e6"/>
<rect x="912.01" y="434.1" width="3.6" height="148.90" fill="#4f91e6"/>
<rect x="916.58" y="426.2" width="3.6" height="156.80" fill="#4f91e6"/>
<rect x="921.14" y="434.1" width="3.6" height="148.90" fill="#4f91e6"/>
<rect x="925.70" y="428.1" width="3.6" height="154.90" fill="#4f91e6"/>
<rect x="930.27" y="434.3" width="3.6" height="148.70" fill="#4f91e6"/>
<rect x="934.83" y="427.1" width="3.6" height="155.90" fill="#4f91e6"/>
<rect x="939.39" y="434.3" width="3.6" height="148.70" fill="#4f91e6"/>
<rect x="943.95" y="427.1" width="3.6" height="155.90" fill="#4f91e6"/>
<rect x="948.52" y="434.3" width="3.6" height="148.70" fill="#4f91e6"/>
<rect x="953.08" y="419.2" width="3.6" height="163.80" fill="#4f91e6"/>
<rect x="957.64" y="433.2" width="3.6" height="149.80" fill="#4f91e6"/>
<rect x="962.21" y="426.1" width="3.6" height="156.90" fill="#4f91e6"/>
<rect x="966.77" y="433.2" width="3.6" height="149.80" fill="#4f91e6"/>
<rect x="971.33" y="424.2" width="3.6" height="158.80" fill="#4f91e6"/>
<rect x="975.90" y="433.2" width="3.6" height="149.80" fill="#4f91e6"/>
<rect x="980.46" y="424.2" width="3.6" height="158.80" fill="#4f91e6"/>
<rect x="985.02" y="435.2" width="3.6" height="147.80" fill="#4f91e6"/>
<rect x="989.59" y="423.2" width="3.6" height="159.80" fill="#4f91e6"/>
<rect x="579" y="583" width="1" height="4" fill="#979aa9"/>
<text x="561.86" y="597.00" font-size="10.4" fill="#2f3542" font-weight="normal" textLength="35.85" lengthAdjust="spacingAndGlyphs">Mon 16</text>
<rect x="689" y="583" width="1" height="4" fill="#979aa9"/>
<text x="676.53" y="597.00" font-size="10.4" fill="#2f3542" font-weight="normal" textLength="25.76" lengthAdjust="spacingAndGlyphs">12:00</text>
<rect x="798" y="583" width="1" height="4" fill="#979aa9"/>
<text x="783.92" y="597.00" font-size="10.4" fill="#2f3542" font-weight="normal" textLength="30.84" lengthAdjust="spacingAndGlyphs">Tue 17</text>
<rect x="908" y="583" width="1" height="4" fill="#979aa9"/>
<text x="895.73" y="597.00" font-size="10.4" fill="#2f3542" font-weight="normal" textLength="25.76" lengthAdjust="spacingAndGlyphs">12:00</text>
<rect x="556" y="581" width="438" height="2" fill="#979aa9" opacity="0.95"/>
<rect x="546" y="616" width="11" height="11" rx="2" fill="#a2c9fb"/>
<text x="563.08" y="624.60" font-size="11.3" fill="#2f3542" font-weight="normal" textLength="25.72" lengthAdjust="spacingAndGlyphs">error</text>
<rect x="605" y="616" width="11" height="11" rx="2" fill="#4f91e6"/>
<text x="622.40" y="624.60" font-size="11.3" fill="#2f3542" font-weight="normal" textLength="39.28" lengthAdjust="spacingAndGlyphs">success</text>
<rect x="1009.5" y="358.5" width="489" height="277" rx="6" ry="6" fill="#fff" stroke="#e1e1ea" stroke-width="1"/>
<text x="1017.83" y="380.20" font-size="15.45" fill="#2f3542" font-weight="normal" textLength="162.51" lengthAdjust="spacingAndGlyphs">Cron Health Check Ops</text>
<rect x="1010" y="389" width="488" height="1" fill="#e3e4ee"/>
<rect x="1055" y="390" width="438" height="8" fill="url(#hatch2)"/>
<rect x="1055" y="407" width="438" height="1" fill="#ececee"/>
<text x="1052.30" y="411.13" font-size="10.2" fill="#2f3542" text-anchor="end" font-weight="normal">10</text>
<rect x="1055" y="425" width="438" height="1" fill="#ececee"/>
<text x="1052.30" y="429.59" font-size="10.2" fill="#2f3542" text-anchor="end" font-weight="normal">8</text>
<rect x="1055" y="446" width="438" height="1" fill="#ececee"/>
<text x="1052.30" y="450.54" font-size="10.2" fill="#2f3542" text-anchor="end" font-weight="normal">6</text>
<rect x="1055" y="471" width="438" height="1" fill="#ececee"/>
<text x="1052.30" y="475.40" font-size="10.2" fill="#2f3542" text-anchor="end" font-weight="normal">4</text>
<rect x="1055" y="503" width="438" height="1" fill="#ececee"/>
<text x="1052.30" y="507.79" font-size="10.2" fill="#2f3542" text-anchor="end" font-weight="normal">2</text>
<text x="1052.30" y="586.00" font-size="10.2" fill="#2f3542" text-anchor="end" font-weight="normal">0</text>
<rect x="1055.10" y="416.10" width="3.6" height="166.90" fill="#a2c9fb"/>
<rect x="1059.66" y="446.54" width="3.6" height="136.46" fill="#a2c9fb"/>
<rect x="1064.23" y="435.69" width="3.6" height="147.31" fill="#a2c9fb"/>
<rect x="1068.79" y="446.54" width="3.6" height="136.46" fill="#a2c9fb"/>
<rect x="1073.35" y="446.54" width="3.6" height="136.46" fill="#a2c9fb"/>
<rect x="1077.91" y="446.54" width="3.6" height="136.46" fill="#a2c9fb"/>
<rect x="1082.48" y="446.54" width="3.6" height="136.46" fill="#a2c9fb"/>
<rect x="1087.04" y="446.54" width="3.6" height="136.46" fill="#a2c9fb"/>
<rect x="1091.60" y="435.69" width="3.6" height="147.31" fill="#a2c9fb"/>
<rect x="1096.17" y="446.54" width="3.6" height="136.46" fill="#a2c9fb"/>
<rect x="1100.73" y="416.10" width="3.6" height="166.90" fill="#a2c9fb"/>
<rect x="1105.29" y="435.69" width="3.6" height="147.31" fill="#a2c9fb"/>
<rect x="1109.86" y="425.59" width="3.6" height="157.41" fill="#a2c9fb"/>
<rect x="1114.42" y="446.54" width="3.6" height="136.46" fill="#a2c9fb"/>
<rect x="1118.98" y="435.69" width="3.6" height="147.31" fill="#a2c9fb"/>
<rect x="1123.54" y="446.54" width="3.6" height="136.46" fill="#a2c9fb"/>
<rect x="1128.11" y="416.10" width="3.6" height="166.90" fill="#a2c9fb"/>
<rect x="1132.67" y="446.54" width="3.6" height="136.46" fill="#a2c9fb"/>
<rect x="1137.23" y="446.54" width="3.6" height="136.46" fill="#a2c9fb"/>
<rect x="1141.80" y="425.59" width="3.6" height="157.41" fill="#a2c9fb"/>
<rect x="1146.36" y="446.54" width="3.6" height="136.46" fill="#a2c9fb"/>
<rect x="1150.92" y="446.54" width="3.6" height="136.46" fill="#a2c9fb"/>
<rect x="1155.49" y="458.35" width="3.6" height="124.65" fill="#a2c9fb"/>
<rect x="1160.05" y="471.40" width="3.6" height="111.60" fill="#a2c9fb"/>
<rect x="1164.61" y="458.35" width="3.6" height="124.65" fill="#a2c9fb"/>
<rect x="1169.17" y="425.59" width="3.6" height="157.41" fill="#a2c9fb"/>
<rect x="1173.74" y="446.54" width="3.6" height="136.46" fill="#a2c9fb"/>
<rect x="1178.30" y="446.54" width="3.6" height="136.46" fill="#a2c9fb"/>
<rect x="1182.86" y="435.69" width="3.6" height="147.31" fill="#a2c9fb"/>
<rect x="1187.43" y="458.35" width="3.6" height="124.65" fill="#a2c9fb"/>
<rect x="1191.99" y="458.35" width="3.6" height="124.65" fill="#a2c9fb"/>
<rect x="1196.55" y="425.59" width="3.6" height="157.41" fill="#a2c9fb"/>
<rect x="1201.12" y="435.69" width="3.6" height="147.31" fill="#a2c9fb"/>
<rect x="1205.68" y="435.69" width="3.6" height="147.31" fill="#a2c9fb"/>
<rect x="1210.24" y="435.69" width="3.6" height="147.31" fill="#a2c9fb"/>
<rect x="1214.80" y="446.54" width="3.6" height="136.46" fill="#a2c9fb"/>
<rect x="1219.37" y="435.69" width="3.6" height="147.31" fill="#a2c9fb"/>
<rect x="1223.93" y="446.54" width="3.6" height="136.46" fill="#a2c9fb"/>
<rect x="1228.49" y="446.54" width="3.6" height="136.46" fill="#a2c9fb"/>
<rect x="1233.06" y="446.54" width="3.6" height="136.46" fill="#a2c9fb"/>
<rect x="1237.62" y="435.69" width="3.6" height="147.31" fill="#a2c9fb"/>
<rect x="1242.18" y="446.54" width="3.6" height="136.46" fill="#a2c9fb"/>
<rect x="1246.75" y="446.54" width="3.6" height="136.46" fill="#a2c9fb"/>
<rect x="1251.31" y="446.54" width="3.6" height="136.46" fill="#a2c9fb"/>
<rect x="1255.87" y="446.54" width="3.6" height="136.46" fill="#a2c9fb"/>
<rect x="1260.43" y="446.54" width="3.6" height="136.46" fill="#a2c9fb"/>
<rect x="1265.00" y="446.54" width="3.6" height="136.46" fill="#a2c9fb"/>
<rect x="1269.56" y="446.54" width="3.6" height="136.46" fill="#a2c9fb"/>
<rect x="1274.12" y="425.59" width="3.6" height="157.41" fill="#a2c9fb"/>
<rect x="1278.69" y="435.69" width="3.6" height="147.31" fill="#a2c9fb"/>
<rect x="1283.25" y="435.69" width="3.6" height="147.31" fill="#a2c9fb"/>
<rect x="1287.81" y="446.54" width="3.6" height="136.46" fill="#a2c9fb"/>
<rect x="1292.38" y="446.54" width="3.6" height="136.46" fill="#a2c9fb"/>
<rect x="1296.94" y="435.69" width="3.6" height="147.31" fill="#a2c9fb"/>
<rect x="1301.50" y="446.54" width="3.6" height="136.46" fill="#a2c9fb"/>
<rect x="1306.06" y="446.54" width="3.6" height="136.46" fill="#a2c9fb"/>
<rect x="1310.63" y="425.59" width="3.6" height="157.41" fill="#a2c9fb"/>
<rect x="1315.19" y="458.35" width="3.6" height="124.65" fill="#a2c9fb"/>
<rect x="1319.75" y="446.54" width="3.6" height="136.46" fill="#a2c9fb"/>
<rect x="1324.32" y="446.54" width="3.6" height="136.46" fill="#a2c9fb"/>
<rect x="1328.88" y="446.54" width="3.6" height="136.46" fill="#a2c9fb"/>
<rect x="1333.44" y="446.54" width="3.6" height="136.46" fill="#a2c9fb"/>
<rect x="1338.01" y="446.54" width="3.6" height="136.46" fill="#a2c9fb"/>
<rect x="1342.57" y="425.59" width="3.6" height="157.41" fill="#a2c9fb"/>
<rect x="1347.13" y="446.54" width="3.6" height="136.46" fill="#a2c9fb"/>
<rect x="1351.69" y="446.54" width="3.6" height="136.46" fill="#a2c9fb"/>
<rect x="1356.26" y="446.54" width="3.6" height="136.46" fill="#a2c9fb"/>
<rect x="1360.82" y="425.59" width="3.6" height="157.41" fill="#a2c9fb"/>
<rect x="1365.38" y="425.59" width="3.6" height="157.41" fill="#a2c9fb"/>
<rect x="1369.95" y="446.54" width="3.6" height="136.46" fill="#a2c9fb"/>
<rect x="1374.51" y="446.54" width="3.6" height="136.46" fill="#a2c9fb"/>
<rect x="1379.07" y="471.40" width="3.6" height="111.60" fill="#a2c9fb"/>
<rect x="1383.64" y="446.54" width="3.6" height="136.46" fill="#a2c9fb"/>
<rect x="1388.20" y="446.54" width="3.6" height="136.46" fill="#a2c9fb"/>
<rect x="1392.76" y="446.54" width="3.6" height="136.46" fill="#a2c9fb"/>
<rect x="1397.32" y="446.54" width="3.6" height="136.46" fill="#a2c9fb"/>
<rect x="1401.89" y="446.54" width="3.6" height="136.46" fill="#a2c9fb"/>
<rect x="1406.45" y="446.54" width="3.6" height="136.46" fill="#a2c9fb"/>
<rect x="1411.01" y="446.54" width="3.6" height="136.46" fill="#a2c9fb"/>
<rect x="1415.58" y="446.54" width="3.6" height="136.46" fill="#a2c9fb"/>
<rect x="1420.14" y="446.54" width="3.6" height="136.46" fill="#a2c9fb"/>
<rect x="1424.70" y="458.35" width="3.6" height="124.65" fill="#a2c9fb"/>
<rect x="1429.27" y="458.35" width="3.6" height="124.65" fill="#a2c9fb"/>
<rect x="1433.83" y="446.54" width="3.6" height="136.46" fill="#a2c9fb"/>
<rect x="1438.39" y="446.54" width="3.6" height="136.46" fill="#a2c9fb"/>
<rect x="1442.95" y="446.54" width="3.6" height="136.46" fill="#a2c9fb"/>
<rect x="1447.52" y="435.69" width="3.6" height="147.31" fill="#a2c9fb"/>
<rect x="1452.08" y="446.54" width="3.6" height="136.46" fill="#a2c9fb"/>
<rect x="1456.64" y="446.54" width="3.6" height="136.46" fill="#a2c9fb"/>
<rect x="1461.21" y="446.54" width="3.6" height="136.46" fill="#a2c9fb"/>
<rect x="1465.77" y="446.54" width="3.6" height="136.46" fill="#a2c9fb"/>
<rect x="1470.33" y="425.59" width="3.6" height="157.41" fill="#a2c9fb"/>
<rect x="1474.90" y="446.54" width="3.6" height="136.46" fill="#a2c9fb"/>
<rect x="1479.46" y="471.40" width="3.6" height="111.60" fill="#a2c9fb"/>
<rect x="1484.02" y="486.22" width="3.6" height="96.78" fill="#a2c9fb"/>
<rect x="1488.58" y="471.40" width="3.6" height="111.60" fill="#a2c9fb"/>
<rect x="1078" y="583" width="1" height="4" fill="#979aa9"/>
<text x="1060.66" y="597.00" font-size="10.4" fill="#2f3542" font-weight="normal" textLength="35.85" lengthAdjust="spacingAndGlyphs">Mon 16</text>
<rect x="1187" y="583" width="1" height="4" fill="#979aa9"/>
<text x="1175.33" y="597.00" font-size="10.4" fill="#2f3542" font-weight="normal" textLength="25.76" lengthAdjust="spacingAndGlyphs">12:00</text>
<rect x="1297" y="583" width="1" height="4" fill="#979aa9"/>
<text x="1282.72" y="597.00" font-size="10.4" fill="#2f3542" font-weight="normal" textLength="30.84" lengthAdjust="spacingAndGlyphs">Tue 17</text>
<rect x="1407" y="583" width="1" height="4" fill="#979aa9"/>
<text x="1394.53" y="597.00" font-size="10.4" fill="#2f3542" font-weight="normal" textLength="25.76" lengthAdjust="spacingAndGlyphs">12:00</text>
<rect x="1055" y="581" width="438" height="2" fill="#979aa9" opacity="0.95"/>
<rect x="1045" y="616" width="11" height="11" rx="2" fill="#a2c9fb"/>
<text x="1061.70" y="624.60" font-size="11.3" fill="#2f3542" font-weight="normal" textLength="39.48" lengthAdjust="spacingAndGlyphs">success</text>
</svg>
</body></html>
